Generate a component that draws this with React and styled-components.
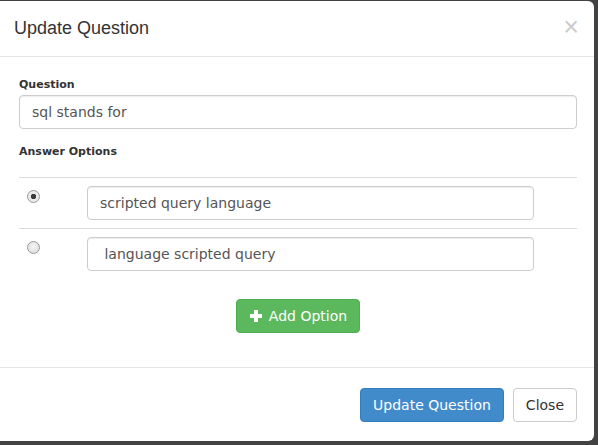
import styled, { createGlobalStyle } from "styled-components";

const GlobalStyle = createGlobalStyle`
  html, body {
    margin: 0;
    background: #424242;
  }
  body {
    font-family: "DejaVu Sans", Verdana, sans-serif;
    color: #333;
  }
`;

const Modal = styled.div`
  width: 594px;
  height: 440px;
  margin-top: 1px;
  background: #fff;
  border-radius: 0 6px 6px 0;
  display: flex;
  flex-direction: column;
  box-sizing: border-box;
`;

const Header = styled.div`
  display: flex;
  align-items: center;
  justify-content: space-between;
  padding: 15px 15px 15px 14px;
  border-bottom: 1px solid #e5e5e5;
`;

const Title = styled.h4`
  margin: 0;
  font-family: "Liberation Sans", Arial, sans-serif;
  font-size: 18px;
  font-weight: normal;
  line-height: 25px;
  color: #333;
`;

const CloseX = styled.button`
  border: 0;
  background: none;
  padding: 0;
  margin-top: -2px;
  font-family: "Liberation Sans", Arial, sans-serif;
  font-size: 27px;
  font-weight: normal;
  line-height: 1;
  color: #000;
  opacity: 0.2;
  cursor: pointer;
`;

const Body = styled.div`
  flex: 1;
  padding: 20px 17px 0 19px;
  display: flex;
  flex-direction: column;
`;

const Label = styled.label`
  display: block;
  font-size: 11px;
  font-weight: bold;
  line-height: 15px;
  margin-bottom: ${(p) => p.$gap || 3}px;
`;

const Input = styled.input`
  display: block;
  box-sizing: border-box;
  width: 100%;
  height: 34px;
  padding: 6px 12px;
  font-family: "DejaVu Sans", Verdana, sans-serif;
  font-size: 14px;
  line-height: 20px;
  color: #555;
  background: #fff;
  border: 1px solid #ccc;
  border-radius: 4px;
  box-shadow: inset 0 1px 1px rgba(0, 0, 0, 0.075);
  margin-bottom: ${(p) => p.$gap || 0}px;
  outline: none;
`;

const Table = styled.table`
  width: 100%;
  table-layout: fixed;
  border-collapse: collapse;
  border-spacing: 0;
`;

const Cell = styled.td`
  padding: 8px;
  border-top: 1px solid #ddd;
  vertical-align: top;
`;

const Radio = styled.input`
  appearance: none;
  display: block;
  width: 13px;
  height: 13px;
  margin: 4px 0 0;
  border-radius: 50%;
  border: 1px solid #9a9a9a;
  box-sizing: border-box;
  background: ${(p) =>
    p.checked
      ? "radial-gradient(circle, #3a3a3a 0 2.4px, #eaeaea 3px)"
      : "radial-gradient(circle at 50% 40%, #f4f4f4, #d9d9d9)"};
`;

const Center = styled.div`
  display: flex;
  justify-content: center;
  margin-top: 20px;
`;

const Button = styled.button`
  display: inline-flex;
  align-items: center;
  box-sizing: border-box;
  height: 34px;
  padding: 6px 12px;
  font-family: "DejaVu Sans", Verdana, sans-serif;
  font-size: 14px;
  line-height: 20px;
  border-radius: 4px;
  border: 1px solid ${(p) => p.$border};
  background: ${(p) => p.$bg};
  color: ${(p) => p.$fg};
  cursor: pointer;
`;

const PlusIcon = styled.svg`
  width: 12px;
  height: 12px;
  margin-right: 7px;
  margin-left: 1px;
`;

const Footer = styled.div`
  display: flex;
  justify-content: flex-end;
  gap: 9px;
  padding: 20px 17px 19px;
  border-top: 1px solid #e5e5e5;
`;

const options = [
  { text: "scripted query language", checked: true },
  { text: " language scripted query", checked: false },
];

export default function App() {
  return (
    <>
      <GlobalStyle />
      <Modal>
        <Header>
          <Title>Update Question</Title>
          <CloseX>×</CloseX>
        </Header>
        <Body>
          <Label>Question</Label>
          <Input defaultValue="sql stands for" $gap={15} />
          <Label $gap={18}>Answer Options</Label>
          <Table>
            <colgroup>
              <col style={{ width: 60 }} />
              <col />
              <col style={{ width: 35 }} />
            </colgroup>
            <tbody>
              {options.map((o, i) => (
                <tr key={i}>
                  <Cell>
                    <Radio type="radio" name="answer" checked={o.checked} readOnly />
                  </Cell>
                  <Cell>
                    <Input defaultValue={o.text} />
                  </Cell>
                  <Cell />
                </tr>
              ))}
            </tbody>
          </Table>
          <Center>
            <Button $bg="#5cb85c" $border="#4cae4c" $fg="#fff">
              <PlusIcon viewBox="0 0 12 12">
                <rect x="4" y="0" width="4" height="12" fill="#fff" />
                <rect x="0" y="4" width="12" height="4" fill="#fff" />
              </PlusIcon>
              Add Option
            </Button>
          </Center>
        </Body>
        <Footer>
          <Button $bg="#428bca" $border="#357ebd" $fg="#fff">
            Update Question
          </Button>
          <Button $bg="#fff" $border="#ccc" $fg="#333">
            Close
          </Button>
        </Footer>
      </Modal>
    </>
  );
}
